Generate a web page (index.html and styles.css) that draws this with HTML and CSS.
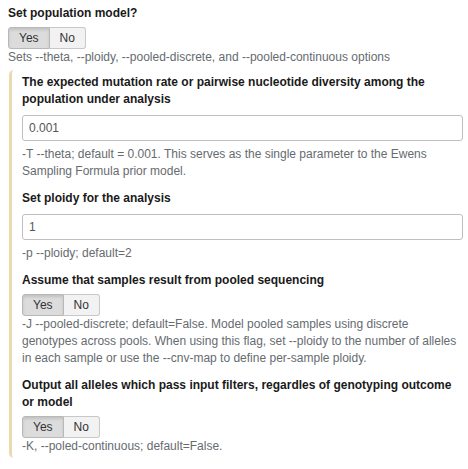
FILE: index.html
```html
<!DOCTYPE html>
<html>
<head>
<meta charset="utf-8">
<link rel="stylesheet" href="styles.css">
</head>
<body>
<div class="form">
  <div class="field top">
    <div class="label">Set population model?</div>
    <div class="btn-group">
      <span class="btn active">Yes</span><span class="btn">No</span>
    </div>
    <div class="help">Sets --theta, --ploidy, --pooled-discrete, and --pooled-continuous options</div>
  </div>
  <div class="section">
    <div class="field">
      <div class="label">The expected mutation rate or pairwise nucleotide diversity among the population under analysis</div>
      <input class="input" type="text" value="0.001">
      <div class="help after-input">-T --theta; default = 0.001. This serves as the single parameter to the Ewens Sampling Formula prior model.</div>
    </div>
    <div class="field">
      <div class="label">Set ploidy for the analysis</div>
      <input class="input" type="text" value="1">
      <div class="help after-input">-p --ploidy; default=2</div>
    </div>
    <div class="field">
      <div class="label">Assume that samples result from pooled sequencing</div>
      <div class="btn-group">
        <span class="btn active">Yes</span><span class="btn">No</span>
      </div>
      <div class="help">-J --pooled-discrete; default=False. Model pooled samples using discrete genotypes across pools. When using this flag, set --ploidy to the number of alleles in each sample or use the --cnv-map to define per-sample ploidy.</div>
    </div>
    <div class="field">
      <div class="label">Output all alleles which pass input filters, regardles of genotyping outcome or model</div>
      <div class="btn-group">
        <span class="btn active">Yes</span><span class="btn">No</span>
      </div>
      <div class="help">-K, --poled-continuous; default=False.</div>
    </div>
  </div>
</div>
</body>
</html>
```

FILE: styles.css
```css
html, body {
  margin: 0;
  padding: 0;
  background: #fff;
}
body {
  font-family: "Liberation Sans", Arial, sans-serif;
  font-size: 12px;
  line-height: 17px;
  color: #333;
}
.form {
  padding: 5px 5px 0 8px;
}
.field {
  display: flex;
  flex-direction: column;
  align-items: flex-start;
}
.label {
  font-weight: bold;
  color: #1a1a1a;
  margin-bottom: 5px;
}
.btn-group {
  display: flex;
}
.btn {
  display: block;
  height: 20px;
  line-height: 20px;
  padding: 0 10px;
  border: 1px solid #c8c8c8;
  background: #f2f2f2;
  color: #333;
  font-size: 12px;
}
.btn:first-child {
  border-radius: 3px 0 0 3px;
}
.btn:last-child {
  border-radius: 0 3px 3px 0;
  border-left: none;
}
.btn.active {
  background: #dcdcdc;
  border-color: #b8b8b8;
  box-shadow: inset 0 2px 3px rgba(0, 0, 0, 0.12);
}
.help {
  color: #666b70;
}
.help.after-input {
  margin-top: 5px;
}
.section {
  margin: 4px 0 0 1px;
  padding: 4px 0 3px 10px;
  border-left: 3px solid #ebd9b2;
  border-radius: 5px;
  display: flex;
  flex-direction: column;
  gap: 10px;
}
.input {
  box-sizing: border-box;
  width: 100%;
  height: 26px;
  margin: 2px 0 0 0;
  padding: 0 6px;
  border: 1px solid #bfbfbf;
  border-radius: 3px;
  font-family: "Liberation Sans", Arial, sans-serif;
  font-size: 12px;
  color: #555;
  background: #fff;
}
```
